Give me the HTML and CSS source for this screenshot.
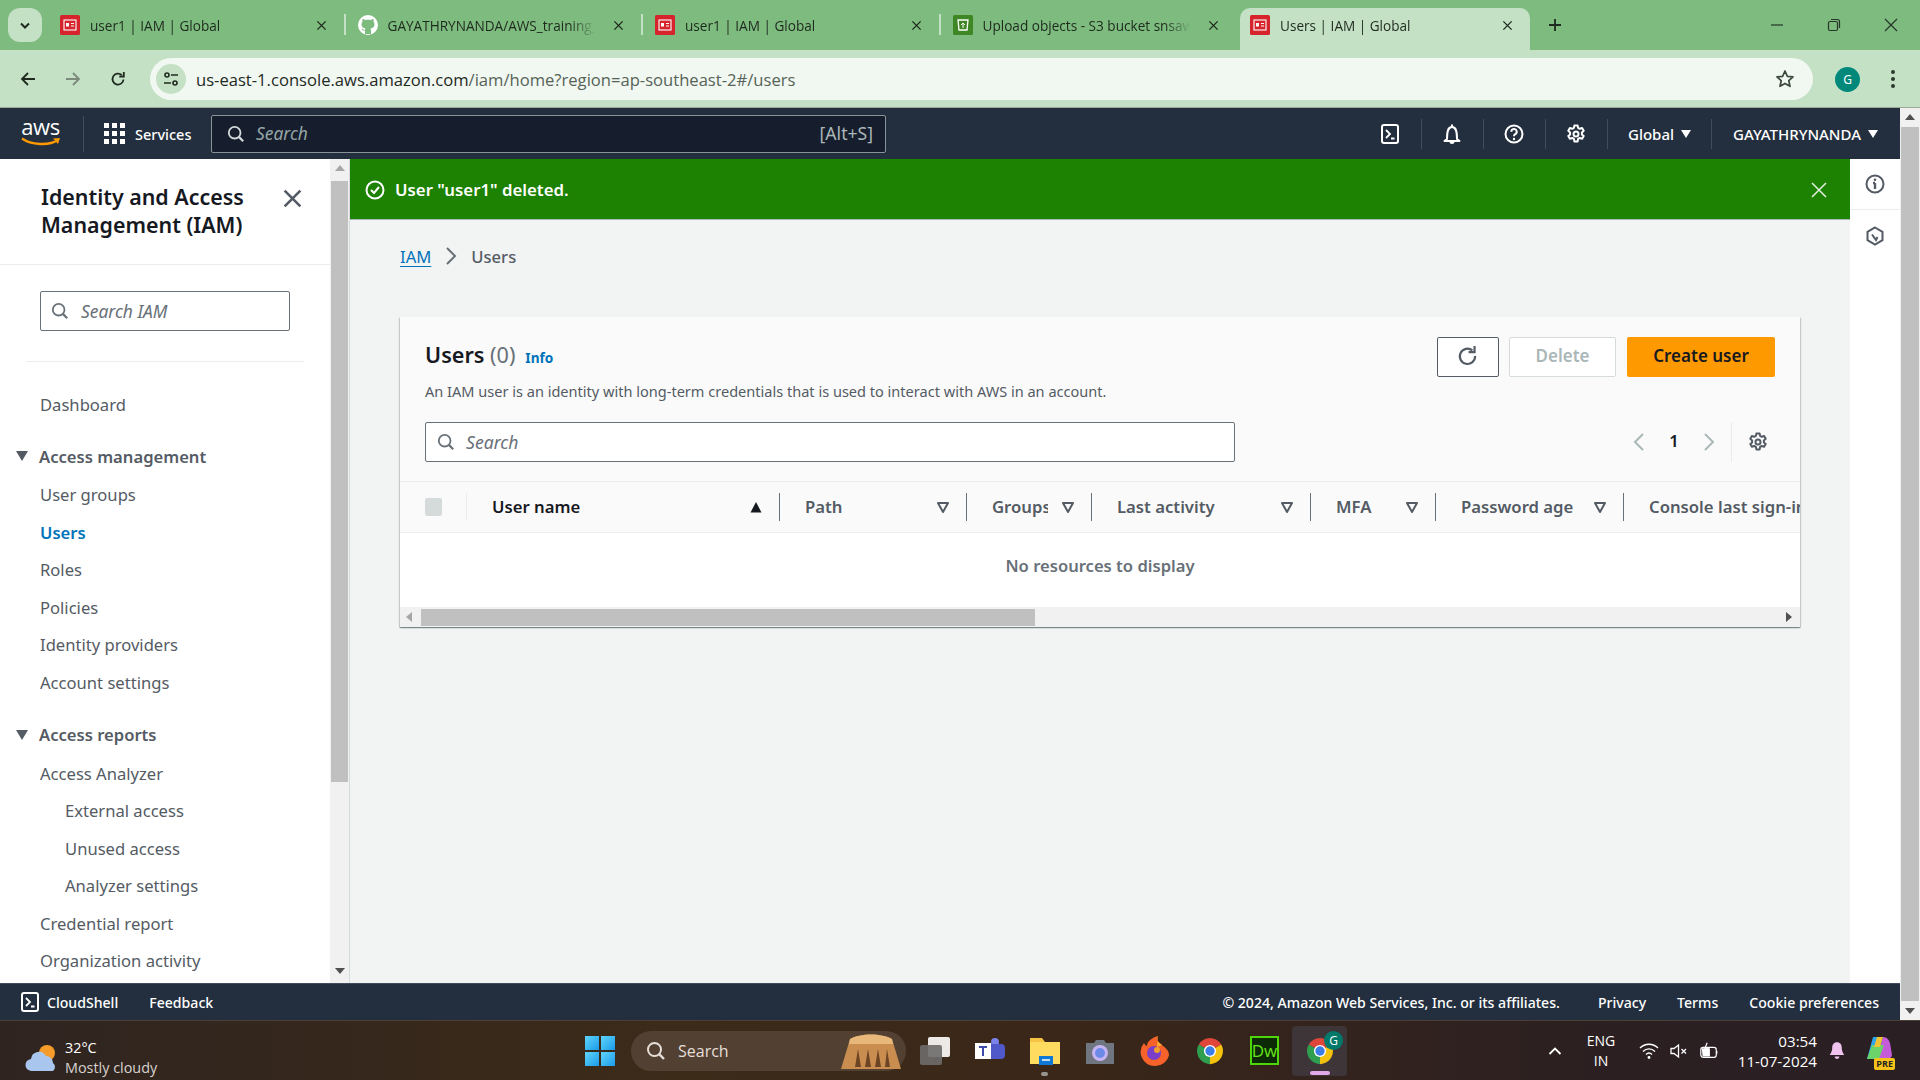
FILE: index.html
```html
<!DOCTYPE html>
<html lang="en">
<head>
    <meta charset="UTF-8">
    <meta name="viewport" content="width=device-width, initial-scale=1.0">
    <title>Users | IAM | Global</title>
    <link rel="stylesheet" href="styles.css">
</head>
<body>
    <svg class="sprites" width="0" height="0">
        <symbol id="i-search" viewBox="0 0 20 20"><circle cx="8.5" cy="8.5" r="6.5" fill="none" stroke="currentColor" stroke-width="2"/><path d="M13.2 13.2 18 18" stroke="currentColor" stroke-width="2.4" fill="none"/></symbol>
        <symbol id="i-close" viewBox="0 0 16 16"><path d="M2 2 14 14M14 2 2 14" stroke="currentColor" stroke-width="2" fill="none"/></symbol>
        <symbol id="i-gear" viewBox="0 0 20 20"><path d="M8.4 1.5h3.2l.5 2.4 1.7.9 2.3-.8 1.6 2.8-1.8 1.6v2l1.8 1.6-1.6 2.8-2.3-.8-1.7.9-.5 2.6H8.4l-.5-2.6-1.7-.9-2.3.8-1.6-2.8 1.8-1.6v-2L2.300 6.800l1.600-2.800 2.300.8 1.700-.9z" fill="none" stroke="currentColor" stroke-width="2" stroke-linejoin="round"/><circle cx="10" cy="10" r="2.500" fill="none" stroke="currentColor" stroke-width="2"/></symbol>
        <symbol id="i-shell" viewBox="0 0 20 20"><rect x="2" y="1" width="16" height="18" rx="2" fill="none" stroke="currentColor" stroke-width="2"/><path d="M6 6l4 4-4 4M11 14.500h3.500" fill="none" stroke="currentColor" stroke-width="1.800"/></symbol>
        <symbol id="i-filter" viewBox="0 0 14 14"><path d="M2 3h10L7 12z" fill="none" stroke="currentColor" stroke-width="2" stroke-linejoin="round"/></symbol>
        <symbol id="i-fav" viewBox="0 0 20 20"><rect width="20" height="20" rx="1.500" fill="#d6242d"/><rect x="4" y="5" width="12" height="10" fill="none" stroke="#fff" stroke-width="1.100"/><rect x="6" y="8" width="3" height="3.500" fill="#fff"/><path d="M11 8.500h3M11 11h3" stroke="#fff"/></symbol>
        <symbol id="i-chrome" viewBox="0 0 32 32"><path d="M16 16 4 9a14 14 0 0 1 24 0z" fill="#e0453a"/><path d="M16 16 28 9a14 14 0 0 1-12 21z" fill="#f4c20d"/><path d="M16 16v14A14 14 0 0 1 4 9z" fill="#2f9e4f"/><circle cx="16" cy="16" r="6.500" fill="#fff"/><circle cx="16" cy="16" r="5" fill="#3b7de9"/></symbol>
    </svg>

    <div class="window">
        <div class="tabstrip">
            <button class="tab-menu"><svg width="12" height="8" viewBox="0 0 12 8"><path d="M2 1.500 6 5.500 10 1.500" fill="none" stroke="#1f2a1f" stroke-width="2"/></svg></button>
            <div class="tab">
                <svg class="favicon"><use href="#i-fav"/></svg>
                <span class="tab-title">user1 | IAM | Global</span>
                <svg class="tab-close"><use href="#i-close"/></svg>
            </div>
            <div class="tab">
                <svg class="favicon" viewBox="0 0 20 20"><circle cx="10" cy="10" r="10" fill="#fff"/><path d="M7 19v-3.500c-2.500.5-3-1-3.500-2 1.200.2 1.800 1.500 3.500 1.500 0-.8.300-1.300.6-1.600C5 13 3.500 12 3.500 9c0-1 .4-1.800 1-2.500-.2-.6-.2-1.500.1-2.400 1 0 2 .5 2.700 1 1.700-.4 3.700-.4 5.400 0 .7-.5 1.700-1 2.700-1 .3.900.3 1.800.1 2.400.6.700 1 1.500 1 2.500 0 3-1.500 4-4.100 4.400.4.400.6 1 .6 1.800V19z" fill="#7dbb7e"/></svg>
                <span class="tab-title">GAYATHRYNANDA/AWS_training_files</span>
                <svg class="tab-close"><use href="#i-close"/></svg>
            </div>
            <div class="tab">
                <svg class="favicon"><use href="#i-fav"/></svg>
                <span class="tab-title">user1 | IAM | Global</span>
                <svg class="tab-close"><use href="#i-close"/></svg>
            </div>
            <div class="tab no-sep">
                <svg class="favicon" viewBox="0 0 20 20"><rect width="20" height="20" rx="1.500" fill="#3f8624"/><path d="M5 5h10l-1 10H6z" fill="none" stroke="#fff" stroke-width="1.300"/><path d="M8 10l2-2 2 2M10 8v5" stroke="#fff" fill="none"/></svg>
                <span class="tab-title">Upload objects - S3 bucket snsaws-bucket</span>
                <svg class="tab-close"><use href="#i-close"/></svg>
            </div>
            <div class="tab active">
                <svg class="favicon"><use href="#i-fav"/></svg>
                <span class="tab-title">Users | IAM | Global</span>
                <svg class="tab-close"><use href="#i-close"/></svg>
            </div>
            <svg class="new-tab" viewBox="0 0 14 14"><path d="M7 1v12M1 7h12" stroke="#1f2a1f" stroke-width="1.800"/></svg>
            <div class="win-controls">
                <svg viewBox="0 0 14 14"><path d="M1 7h12" stroke="#26352a" stroke-width="1.200"/></svg>
                <svg viewBox="0 0 14 14"><rect x="1.500" y="3.500" width="9" height="9" rx="1.500" fill="none" stroke="#26352a" stroke-width="1.200"/><path d="M4 1.500h6.500a2 2 0 0 1 2 2V10" fill="none" stroke="#26352a" stroke-width="1.200"/></svg>
                <svg viewBox="0 0 14 14"><path d="M1 1l12 12M13 1 1 13" stroke="#26352a" stroke-width="1.200"/></svg>
            </div>
        </div>

        <div class="toolbar">
            <svg class="tool-icon" viewBox="0 0 16 16"><path d="M15 8H2M8 2 2 8l6 6" fill="none" stroke="#1f2a1f" stroke-width="1.800"/></svg>
            <svg class="tool-icon" viewBox="0 0 16 16"><path d="M1 8h13M8 2l6 6-6 6" fill="none" stroke="#7b8a7c" stroke-width="1.800"/></svg>
            <svg class="tool-icon" viewBox="0 0 16 16"><path d="M13.500 8.500a5.500 5.500 0 1 1-1.800-4.500" fill="none" stroke="#1f2a1f" stroke-width="1.800"/><path d="M13.800 1v4.500H9.300" fill="none" stroke="#1f2a1f" stroke-width="1.800"/></svg>
            <div class="omnibox">
                <span class="site-chip"><svg width="16" height="16" viewBox="0 0 16 16"><circle cx="4" cy="4" r="2" fill="none" stroke="#1f2a1f" stroke-width="1.600"/><path d="M8 4h7M1 12h7" stroke="#1f2a1f" stroke-width="1.600"/><circle cx="12" cy="12" r="2" fill="none" stroke="#1f2a1f" stroke-width="1.600"/></svg></span>
                <span class="url">us-east-1.console.aws.amazon.com<span class="url-path">/iam/home?region=ap-southeast-2#/users</span></span>
                <svg class="star" viewBox="0 0 20 20"><path d="M10 2l2.400 5.300 5.600.6-4.200 3.800 1.200 5.600L10 14.400l-5 2.900 1.200-5.600L2 7.900l5.600-.6z" fill="none" stroke="#3c4a3d" stroke-width="1.700" stroke-linejoin="round"/></svg>
            </div>
            <span class="profile">G</span>
            <span class="kebab"><i></i><i></i><i></i></span>
        </div>

        <div class="console">
            <div class="console-main">
                <header class="topnav">
                    <div class="aws-logo">
                        <span class="aws-word">aws</span>
                        <svg width="40" height="10" viewBox="0 0 40 10"><path d="M1 1.500C10 8 28 9 37 3" fill="none" stroke="#f90" stroke-width="2.400"/><path d="M32 1.500 39 1l-2 6z" fill="#f90"/></svg>
                    </div>
                    <button class="services">
                        <span class="grid-icon"><i></i><i></i><i></i><i></i><i></i><i></i><i></i><i></i><i></i></span>
                        Services
                    </button>
                    <div class="nav-search">
                        <svg class="ico18"><use href="#i-search"/></svg>
                        <span class="nav-search-text">Search</span>
                        <span class="nav-shortcut">[Alt+S]</span>
                    </div>
                    <div class="nav-right">
                        <span class="nav-icon"><svg class="ico20"><use href="#i-shell"/></svg></span>
                        <span class="nav-icon"><svg class="ico20" viewBox="0 0 20 20"><path d="M10 .5v2.500M5 15c0-8 1-12 5-12s5 4 5 12l2.500 2H2.500z" fill="none" stroke="currentColor" stroke-width="2" stroke-linejoin="round"/><path d="M7.500 18a2.500 2 0 0 0 5 0z" fill="currentColor"/></svg></span>
                        <span class="nav-icon"><svg class="ico20" viewBox="0 0 20 20"><circle cx="10" cy="10" r="8.500" fill="none" stroke="currentColor" stroke-width="2"/><path d="M7.300 7.800A2.700 2.700 0 1 1 11 10.300c-.8.400-1 .9-1 2" fill="none" stroke="currentColor" stroke-width="2"/><circle cx="10" cy="15" r="1.200" fill="currentColor"/></svg></span>
                        <span class="nav-icon"><svg class="ico20"><use href="#i-gear"/></svg></span>
                        <span class="nav-menu region">Global <i class="caret"></i></span>
                        <span class="nav-menu account">GAYATHRYNANDA <i class="caret"></i></span>
                    </div>
                </header>

                <div class="middle">
                    <aside class="sidebar">
                        <nav class="side-nav">
                            <div class="side-head">
                                <h2>Identity and Access Management (IAM)</h2>
                                <svg class="side-close"><use href="#i-close"/></svg>
                            </div>
                            <div class="side-search-wrap">
                                <div class="side-search">
                                    <svg class="ico18"><use href="#i-search"/></svg>
                                    <span>Search IAM</span>
                                </div>
                            </div>
                            <a class="side-link first">Dashboard</a>
                            <div class="side-section"><i class="side-caret"></i>Access management</div>
                            <a class="side-link">User groups</a>
                            <a class="side-link current">Users</a>
                            <a class="side-link">Roles</a>
                            <a class="side-link">Policies</a>
                            <a class="side-link">Identity providers</a>
                            <a class="side-link">Account settings</a>
                            <div class="side-section"><i class="side-caret"></i>Access reports</div>
                            <a class="side-link">Access Analyzer</a>
                            <a class="side-link sub">External access</a>
                            <a class="side-link sub">Unused access</a>
                            <a class="side-link sub">Analyzer settings</a>
                            <a class="side-link">Credential report</a>
                            <a class="side-link">Organization activity</a>
                        </nav>
                        <div class="side-scroll">
                            <i class="arrow up"></i>
                            <div class="side-thumb"></div>
                            <i class="arrow down"></i>
                        </div>
                    </aside>

                    <main class="content">
                        <div class="flash">
                            <svg class="ico20" viewBox="0 0 20 20"><circle cx="10" cy="10" r="8.500" fill="none" stroke="#fff" stroke-width="2"/><path d="M6 10l3 3 5-6" fill="none" stroke="#fff" stroke-width="2"/></svg>
                            <span class="flash-text">User "user1" deleted.</span>
                            <svg class="flash-close" viewBox="0 0 16 16"><path d="M1 1l14 14M15 1 1 15" stroke="#e4f0e0" stroke-width="1.500" fill="none"/></svg>
                        </div>
                        <div class="page">
                            <div class="breadcrumb">
                                <a>IAM</a>
                                <svg width="12" height="20" viewBox="0 0 12 20"><path d="M2 2l8 8-8 8" fill="none" stroke="#687078" stroke-width="2"/></svg>
                                <span>Users</span>
                            </div>

                            <section class="card">
                                <div class="card-top">
                                    <div class="card-title-row">
                                        <div class="card-title">
                                            <h1>Users <span class="count">(0)</span></h1>
                                            <a class="info">Info</a>
                                        </div>
                                        <div class="actions">
                                            <button class="btn btn-icon"><svg width="24" height="24" viewBox="0 0 22 22"><path d="M17.500 10a7 7 0 1 1-2.500-5" fill="none" stroke="#545b64" stroke-width="2"/><path d="M17 1v5.500h-5.500" fill="none" stroke="#545b64" stroke-width="2"/></svg></button>
                                            <button class="btn btn-disabled">Delete</button>
                                            <button class="btn btn-primary">Create user</button>
                                        </div>
                                    </div>
                                    <p class="card-desc">An IAM user is an identity with long-term credentials that is used to interact with AWS in an account.</p>
                                    <div class="filter-row">
                                        <div class="table-search">
                                            <svg class="ico18"><use href="#i-search"/></svg>
                                            <span>Search</span>
                                        </div>
                                        <div class="pager">
                                            <svg width="12" height="20" viewBox="0 0 12 20"><path d="M10 2 2 10l8 8" fill="none" stroke="#aab7b8" stroke-width="2"/></svg>
                                            <span class="page-num">1</span>
                                            <svg width="12" height="20" viewBox="0 0 12 20"><path d="M2 2l8 8-8 8" fill="none" stroke="#aab7b8" stroke-width="2"/></svg>
                                            <span class="pager-gear"><svg class="ico20"><use href="#i-gear"/></svg></span>
                                        </div>
                                    </div>
                                </div>

                                <div class="thead">
                                    <div class="col col-check"><span class="checkbox"></span></div>
                                    <div class="col col-user">
                                        <span class="col-name sorted">User name</span>
                                        <svg class="filter" viewBox="0 0 14 14"><path d="M1.500 12.500 7 2l5.500 10.500z" fill="#16191f"/></svg>
                                    </div>
                                    <div class="col col-path">
                                        <span class="col-name">Path</span>
                                        <svg class="filter"><use href="#i-filter"/></svg>
                                    </div>
                                    <div class="col col-groups">
                                        <span class="col-name">Groups</span>
                                        <svg class="filter"><use href="#i-filter"/></svg>
                                    </div>
                                    <div class="col col-activity">
                                        <span class="col-name">Last activity</span>
                                        <svg class="filter"><use href="#i-filter"/></svg>
                                    </div>
                                    <div class="col col-mfa">
                                        <span class="col-name">MFA</span>
                                        <svg class="filter"><use href="#i-filter"/></svg>
                                    </div>
                                    <div class="col col-age">
                                        <span class="col-name">Password age</span>
                                        <svg class="filter"><use href="#i-filter"/></svg>
                                    </div>
                                    <div class="col col-console">
                                        <span class="col-name">Console last sign-in</span>
                                    </div>
                                </div>
                                <div class="empty">No resources to display</div>
                                <div class="hscroll">
                                    <i class="arrow left"></i>
                                    <div class="hthumb"></div>
                                    <i class="arrow right"></i>
                                </div>
                            </section>
                        </div>
                    </main>

                    <aside class="tools">
                        <div class="tools-btn">
                            <svg class="ico20" viewBox="0 0 20 20"><circle cx="10" cy="10" r="8.500" fill="none" stroke="#545b64" stroke-width="2"/><path d="M10 9v6M8 9h2" stroke="#545b64" stroke-width="2.400"/><circle cx="10" cy="5.800" r="1.300" fill="#545b64"/></svg>
                        </div>
                        <div class="tools-btn">
                            <svg class="ico20" viewBox="0 0 20 20"><path d="M10 1.500 17.500 5.800v8.400L10 18.500 2.500 14.200V5.800z" fill="none" stroke="#545b64" stroke-width="2"/><path d="M7 8.500l4 5.500 1.500-3" fill="none" stroke="#545b64" stroke-width="2"/></svg>
                        </div>
                    </aside>
                </div>

                <footer class="foot">
                    <svg class="ico20"><use href="#i-shell"/></svg>
                    <span class="foot-shell">CloudShell</span>
                    <span class="foot-feedback">Feedback</span>
                    <div class="foot-right">
                        <span>© 2024, Amazon Web Services, Inc. or its affiliates.</span>
                        <span>Privacy</span>
                        <span>Terms</span>
                        <span>Cookie preferences</span>
                    </div>
                </footer>
            </div>

            <div class="page-scroll">
                <i class="arrow up dark"></i>
                <div class="page-thumb"></div>
                <i class="arrow down"></i>
            </div>
        </div>

        <div class="taskbar">
            <div class="weather">
                <svg width="34" height="30" viewBox="0 0 34 30"><circle cx="22" cy="10" r="8" fill="#f59c2a"/><path d="M7 28a6 6 0 0 1-1-12 8 8 0 0 1 15-3 7 7 0 0 1 7 7 5 5 0 0 1 0 8z" fill="#a9c6ee"/></svg>
                <div class="weather-text"><span>32°C</span><span class="weather-sub">Mostly cloudy</span></div>
            </div>
            <div class="task-center">
                <span class="win-logo"><i></i><i></i><i></i><i></i></span>
                <div class="task-search">
                    <svg class="ico20"><use href="#i-search"/></svg>
                    <span>Search</span>
                    <svg class="temple" width="66" height="40" viewBox="0 0 66 40"><path d="M3 38 12 8c10-6 32-6 42 0l9 30z" fill="#c98d4f"/><path d="M12 8c10-6 32-6 42 0l1 5H11z" fill="#e8b77a"/><path d="M17 36l3-18 3 18zM27 36l3-18 3 18zM37 36l3-18 3 18zM47 36l2-18 3 18z" fill="#6e4524"/></svg>
                </div>
                <div class="task-apps">
                    <span class="app"><span class="widgets"><i class="back"></i><i class="front"></i></span></span>
                    <span class="app"><svg width="30" height="32" viewBox="0 0 30 32"><rect x="16" y="3" width="8" height="8" rx="4" fill="#7b83eb"/><rect x="12" y="9" width="18" height="15" rx="4" fill="#5059c9"/><rect x="0" y="8" width="16" height="16" fill="#fff"/><path d="M4 12h8M8 12v9" stroke="#3f4aa8" stroke-width="2"/></svg></span>
                    <span class="app"><svg width="30" height="30" viewBox="0 0 30 30"><path d="M0 2h12l3 4h15v22H0z" fill="#f6c344"/><rect y="6" width="30" height="22" fill="#ffdc60"/><rect x="9" y="20" width="14" height="9" fill="#0f78d4"/><path d="M12 24h8" stroke="#fff" stroke-width="1.500"/></svg><i class="app-dot"></i></span>
                    <span class="app"><svg width="30" height="30" viewBox="0 0 30 30"><path d="M1 7h8l2-3h8l2 3h8v21H1z" fill="#6f7680"/><circle cx="15" cy="17" r="8" fill="#c6b4f2"/><circle cx="15" cy="17" r="5" fill="#6e8ae8"/></svg></span>
                    <span class="app"><svg width="30" height="32" viewBox="0 0 30 32"><path d="M15 31A14 14 0 0 1 4 8c1 2 2 3 3 3 0-4 4-8 11-10-2 4 0 6 4 9 4 3 7 6 7 10a14 14 0 0 1-14 11z" fill="#f7622b"/><path d="M18 1c-2 4 0 6 4 9l-5 2z" fill="#fcb32c"/><circle cx="14" cy="18" r="7" fill="#7a3fc9"/><circle cx="17" cy="15" r="3" fill="#f3a02b"/></svg></span>
                    <span class="app"><svg width="30" height="30" viewBox="0 0 32 32"><use href="#i-chrome"/></svg></span>
                    <span class="app"><span class="dw">Dw</span></span>
                    <span class="app current">
                        <svg width="30" height="30" viewBox="0 0 32 32"><use href="#i-chrome"/></svg>
                        <span class="app-badge">G</span>
                        <i class="app-bar"></i>
                    </span>
                </div>
            </div>
            <div class="tray">
                <svg class="tray-chev" viewBox="0 0 14 10"><path d="M1.500 8 7 2.500 12.500 8" fill="none" stroke="#fff" stroke-width="1.800"/></svg>
                <div class="lang"><span>ENG</span><span>IN</span></div>
                <svg class="tray-ico" viewBox="0 0 20 20"><path d="M1 7c5-5 13-5 18 0M4 10.500c3.500-3.500 8.500-3.500 12 0M7 13.500c2-2 4-2 6 0" fill="none" stroke="#fff" stroke-width="1.400"/><circle cx="10" cy="16.500" r="1.400" fill="#fff"/></svg>
                <svg class="tray-ico" viewBox="0 0 20 20"><path d="M2 7.500h3L9.500 4v12L5 12.500H2z" fill="none" stroke="#fff" stroke-width="1.300"/><path d="M12.500 8l4.500 4.500M17 8l-4.500 4.500" stroke="#fff" stroke-width="1.300"/></svg>
                <svg class="tray-ico" viewBox="0 0 22 20"><rect x="2" y="6" width="17" height="11" rx="2.500" fill="none" stroke="#fff" stroke-width="1.300"/><path d="M3 7h9v9H4z" fill="#fff"/><path d="M19.500 10v3" stroke="#fff" stroke-width="1.500"/><path d="M9 1 6.500 7H10l-2 5" fill="none" stroke="#fff" stroke-width="1.300"/></svg>
                <div class="clock"><span>03:54</span><span>11-07-2024</span></div>
                <svg class="tray-bell" viewBox="0 0 20 24"><path d="M10 1c-4 0-6 3-6 7 0 5-2 7-3 9h18c-1-2-3-4-3-9 0-4-2-7-6-7z" fill="#f0c4ee"/><path d="M7 19a3 3 0 0 0 6 0z" fill="#f0c4ee"/></svg>
                <span class="copilot">
                    <svg width="30" height="32" viewBox="0 0 30 32"><path d="M10 3h10l-6 22H4z" fill="#2da5e8"/><path d="M20 3c4 0 6 3 7 6l2 12c0 2-2 4-5 4H14z" fill="#c45bd9"/><path d="M9 11h12l-5 14H4z" fill="#6cd36b"/><path d="M14 3h6l-3 10h-6z" fill="#f1c232"/></svg>
                    <span class="pre">PRE</span>
                </span>
            </div>
        </div>
    </div>
</body>
</html>
```

FILE: styles.css
```css
* {
    box-sizing: border-box;
}

html, body {
    margin: 0;
    height: 100%;
    overflow: hidden;
}

body {
    font-family: 'Noto Sans', 'Open Sans', sans-serif;
    font-size: 16.6px;
    color: #16191f;
}

.sprites {
    position: absolute;
}

button {
    font-family: inherit;
}

.window {
    display: flex;
    flex-direction: column;
    width: 1920px;
    height: 1080px;
}

.ico18 {
    width: 18px;
    height: 18px;
    flex: none;
}

.ico20 {
    width: 20px;
    height: 20px;
    flex: none;
}

/* browser tabs */
.tabstrip {
    display: flex;
    align-items: flex-end;
    height: 50px;
    padding-left: 8px;
    background-color: #7dbb7e;
    font-family: 'Open Sans', sans-serif;
    font-size: 13.6px;
    color: #1f2a1f;
}

.tab-menu {
    align-self: flex-start;
    width: 34px;
    height: 34px;
    margin: 8px 6px 0 0;
    padding: 0;
    border: none;
    border-radius: 12px;
    background-color: #c4e1c5;
}

.tab {
    display: flex;
    align-items: center;
    width: 297.5px;
    height: 42px;
    padding: 0 17px 8px 12px;
    border-right: 2px solid #c4e1c5;
    border-image: linear-gradient(transparent 17%, #c4e1c5 17%, #c4e1c5 64%, transparent 64%) 1;
}

.tab.no-sep,
.tab.active {
    border-right: 2px solid transparent;
    border-image: none;
}

.tab.active {
    width: 290px;
    margin-left: 2px;
    padding-left: 10px;
    border-right: none;
    border-radius: 10px 10px 0 0;
    background-color: #c4e1c5;
}

.favicon {
    width: 20px;
    height: 20px;
    flex: none;
    margin-right: 10px;
}

.tab-title {
    flex: 1;
    min-width: 0;
    overflow: hidden;
    white-space: nowrap;
    -webkit-mask-image: linear-gradient(to right, #000 88%, transparent);
    mask-image: linear-gradient(to right, #000 88%, transparent);
}

.tab-close {
    width: 11px;
    height: 11px;
    flex: none;
    margin-left: 18px;
    color: #1f2a1f;
}

.new-tab {
    width: 14px;
    height: 14px;
    margin: 0 0 18px 18px;
}

.win-controls {
    display: flex;
    gap: 43px;
    margin: 0 22px 18px auto;
}

.win-controls svg {
    width: 14px;
    height: 14px;
}

/* browser toolbar */
.toolbar {
    display: flex;
    align-items: center;
    height: 58px;
    padding: 1px 0 0 20px;
    background-color: #c4e1c5;
    border-bottom: 1px solid #9aaa9b;
}

.tool-icon {
    width: 16px;
    height: 16px;
    flex: none;
    margin-right: 29px;
}

.tool-icon:nth-of-type(3) {
    margin-right: 24px;
}

.omnibox {
    display: flex;
    align-items: center;
    width: 1663px;
    height: 42px;
    padding: 0 18px 0 6px;
    border-radius: 21px;
    background-color: #f1f7f1;
    font-family: 'Open Sans', sans-serif;
}

.site-chip {
    display: flex;
    align-items: center;
    justify-content: center;
    width: 30px;
    height: 30px;
    margin-right: 10px;
    border-radius: 50%;
    background-color: #c4e1c5;
}

.url {
    flex: 1;
    font-size: 16.6px;
    color: #1f2a1f;
}

.url-path {
    color: #566357;
}

.star {
    width: 20px;
    height: 20px;
}

.profile {
    display: flex;
    align-items: center;
    justify-content: center;
    width: 25px;
    height: 25px;
    margin-left: 22px;
    border-radius: 50%;
    background-color: #00897b;
    color: #fff;
    font-size: 12px;
}

.kebab {
    display: flex;
    flex-direction: column;
    gap: 3px;
    margin-left: 31px;
}

.kebab i {
    width: 4px;
    height: 4px;
    border-radius: 50%;
    background-color: #2c3a2d;
}

/* console frame */
.console {
    display: flex;
    height: 912px;
}

.console-main {
    display: flex;
    flex-direction: column;
    width: 1900px;
}

.page-scroll {
    display: flex;
    flex-direction: column;
    align-items: center;
    width: 20px;
    background-color: #f1f1f1;
}

.page-thumb {
    width: 18px;
    height: 874px;
    margin: 7px 0;
    background-color: #c0c0c0;
}

.arrow {
    display: block;
    flex: none;
    width: 0;
    height: 0;
    border: 5px solid transparent;
}

.arrow.up {
    margin-top: 6px;
    border-top: none;
    border-bottom: 6px solid #a6a6a6;
}

.arrow.up.dark {
    border-bottom-color: #505050;
}

.arrow.down {
    border-bottom: none;
    border-top: 6px solid #505050;
}

.arrow.left {
    border-left: none;
    border-right: 6px solid #a6a6a6;
}

.arrow.right {
    border-right: none;
    border-left: 6px solid #505050;
}

/* top nav */
.topnav {
    display: flex;
    align-items: center;
    flex: none;
    height: 51px;
    background-color: #232f3e;
    color: #fff;
}

.aws-logo {
    display: flex;
    flex-direction: column;
    align-items: center;
    width: 84px;
    height: 36px;
    padding: 0 2px 0 0;
    border-right: 1px solid #414d5c;
}

.aws-word {
    height: 20px;
    font-family: 'Open Sans', sans-serif;
    font-size: 22px;
    line-height: 20px;
    letter-spacing: -0.5px;
}

.aws-logo svg {
    margin-top: 1px;
}

.services {
    display: flex;
    align-items: center;
    gap: 10px;
    width: 127px;
    padding: 0 0 0 20px;
    border: none;
    background: none;
    color: #fff;
    font-size: 14.5px;
    font-weight: 500;
}

.grid-icon {
    display: grid;
    grid-template-columns: repeat(3, 5px);
    gap: 3px;
}

.grid-icon i {
    height: 5px;
    background-color: #fff;
}

.nav-search {
    display: flex;
    align-items: center;
    width: 675px;
    height: 38px;
    padding: 0 12px 0 15px;
    border: 1px solid #879596;
    border-radius: 2px;
    background-color: #161e2d;
    color: #d5dbdb;
}

.nav-search-text {
    flex: 1;
    margin-left: 11px;
    padding-bottom: 1px;
    font-size: 17.4px;
    font-style: italic;
    color: #95a5a6;
}

.nav-shortcut {
    padding-bottom: 1px;
    color: #aab7b8;
    font-size: 17.6px;
}

.nav-right {
    display: flex;
    align-items: center;
    margin-left: auto;
    padding-right: 22px;
}

.nav-icon {
    display: flex;
    align-items: center;
    justify-content: center;
    width: 62px;
    height: 30px;
    border-right: 1px solid #414d5c;
}

.nav-menu {
    display: flex;
    align-items: center;
    gap: 8px;
    height: 30px;
    font-size: 15px;
    font-weight: 500;
}

.region {
    padding: 0 20px;
    border-right: 1px solid #414d5c;
}

.account {
    padding-left: 21px;
}

.caret {
    width: 0;
    height: 0;
    margin-left: -1px;
    border-left: 5px solid transparent;
    border-right: 5px solid transparent;
    border-top: 8px solid #fff;
}

/* sidebar + content */
.middle {
    display: flex;
    flex: 1;
    min-height: 0;
}

.sidebar {
    display: flex;
    flex: none;
    width: 350px;
    border-right: 1px solid #d5dbdb;
    background-color: #fff;
}

.side-nav {
    width: 330px;
    color: #545b64;
}

.side-head {
    display: flex;
    align-items: flex-start;
    justify-content: space-between;
    height: 106px;
    padding: 24px 27px 0 41px;
    border-bottom: 1px solid #eaeded;
}

.side-head h2 {
    width: 220px;
    margin: 0;
    font-size: 21.4px;
    font-weight: 600;
    line-height: 28px;
    color: #16191f;
}

.side-close {
    width: 21px;
    height: 21px;
    margin-top: 5px;
    color: #545b64;
}

.side-search-wrap {
    margin: 0 26px;
    padding: 26px 14px 30px;
    border-bottom: 1px solid #eaeded;
}

.side-search {
    display: flex;
    align-items: center;
    gap: 12px;
    height: 40px;
    padding-left: 10px;
    border: 1px solid #687078;
    border-radius: 2px;
    font-size: 17.4px;
    font-style: italic;
    color: #687078;
}

.side-link {
    display: block;
    height: 37.5px;
    padding-left: 40px;
    line-height: 37.5px;
}

.side-link.first {
    margin: 24px 0 14px;
}

.side-link.current {
    color: #0073bb;
    font-weight: 600;
}

.side-link.sub {
    padding-left: 65px;
}

.side-section {
    display: flex;
    align-items: center;
    height: 37.5px;
    margin-bottom: 1px;
    padding-left: 16px;
    font-weight: 600;
}

.side-link:nth-of-type(7) {
    margin-bottom: 15px;
}

.side-caret {
    width: 0;
    height: 0;
    margin-right: 11px;
    border-left: 6px solid transparent;
    border-right: 6px solid transparent;
    border-top: 10px solid #545b64;
}

.side-scroll {
    display: flex;
    flex-direction: column;
    align-items: center;
    width: 19px;
    background-color: #f1f1f1;
}

.side-thumb {
    width: 17px;
    height: 601px;
    margin: 10px 0 186px;
    background-color: #c0c0c0;
}

.content {
    display: flex;
    flex: 1;
    flex-direction: column;
    min-width: 0;
    background-color: #f2f3f3;
}

.flash {
    display: flex;
    align-items: center;
    flex: none;
    height: 61px;
    padding: 1px 23px 0 15px;
    background-color: #1d8102;
    border-bottom: 1px solid #aab7b8;
    color: #fff;
}

.flash-text {
    flex: 1;
    margin-left: 10px;
    font-size: 16.8px;
    font-weight: 600;
}

.flash-close {
    width: 16px;
    height: 16px;
}

.page {
    padding: 23px 49px 0 50px;
}

.breadcrumb {
    display: flex;
    align-items: center;
    gap: 14px;
    height: 26px;
    margin-bottom: 48px;
    color: #545b64;
    font-weight: 500;
}

.breadcrumb a {
    color: #0073bb;
    font-weight: 400;
    text-decoration: underline;
    text-underline-offset: 3px;
}

.card {
    display: flex;
    flex-direction: column;
    width: 1400px;
    height: 310px;
    background-color: #fff;
    box-shadow: 0 1px 1px 0 rgba(0, 28, 36, 0.3), 1px 1px 1px 0 rgba(0, 28, 36, 0.15), -1px 1px 1px 0 rgba(0, 28, 36, 0.15);
}

.card-top {
    height: 165px;
    padding: 20px 25px 0;
    background-color: #fafafa;
    border-bottom: 1px solid #eaeded;
}

.card-title-row {
    display: flex;
    align-items: flex-start;
    justify-content: space-between;
}

.card-title {
    display: flex;
    align-items: baseline;
    gap: 10px;
}

.card-title h1 {
    margin: 0;
    font-size: 21.6px;
    font-weight: 600;
    line-height: 36px;
}

.count {
    font-weight: 400;
    color: #687078;
}

.info {
    color: #0073bb;
    font-size: 13.6px;
    font-weight: 700;
}

.actions {
    display: flex;
    gap: 10px;
}

.btn {
    height: 40px;
    padding: 0 0 3px;
    border: 1px solid transparent;
    border-radius: 2px;
    font-size: 17px;
    font-weight: 600;
}

.btn-icon {
    display: flex;
    align-items: center;
    justify-content: center;
    width: 62px;
    padding: 0;
    border-color: #545b64;
    background-color: #fff;
}

.btn-disabled {
    width: 107px;
    border-color: #d5dbdb;
    background-color: #fff;
    color: #aab7b8;
}

.btn-primary {
    width: 148px;
    margin-left: 1px;
    background-color: #f90;
    color: #16191f;
}

.card-desc {
    margin: 4px 0 0;
    font-size: 14.55px;
    line-height: 20px;
    color: #545b64;
}

.filter-row {
    display: flex;
    align-items: center;
    justify-content: space-between;
    margin-top: 21px;
}

.table-search {
    display: flex;
    align-items: center;
    gap: 11px;
    width: 810px;
    height: 40px;
    padding-left: 11px;
    border: 1px solid #687078;
    border-radius: 2px;
    background-color: #fff;
    font-size: 17.6px;
    font-style: italic;
    color: #687078;
}

.pager {
    display: flex;
    align-items: center;
    color: #16191f;
}

.page-num {
    width: 58px;
    padding-bottom: 3px;
    text-align: center;
    font-weight: 600;
}

.pager-gear {
    display: flex;
    align-items: center;
    height: 40px;
    margin-left: 16px;
    padding-left: 16px;
    padding-right: 7px;
    border-left: 1px solid #eaeded;
    color: #545b64;
}

.thead {
    display: flex;
    align-items: center;
    flex: none;
    height: 51px;
    overflow: hidden;
    background-color: #fafafa;
    border-bottom: 1px solid #eaeded;
}

.col {
    display: flex;
    align-items: center;
    flex: none;
    height: 28px;
    padding: 0 16px 0 25px;
    border-right: 1px solid #687078;
    font-size: 16.7px;
    font-weight: 600;
    color: #545b64;
}

.col-check {
    width: 67px;
    border-right-color: #eaeded;
}

.col-user {
    width: 313px;
}

.col-path {
    width: 187px;
}

.col-groups {
    width: 125px;
}

.col-activity {
    width: 219px;
}

.col-mfa {
    width: 125px;
}

.col-age {
    width: 188px;
}

.col-console {
    width: 240px;
    border-right: none;
}

.col-name {
    flex: 1;
    min-width: 0;
    padding-bottom: 2px;
    overflow: hidden;
    white-space: nowrap;
}

.col-groups .col-name {
    margin-right: 13px;
}

.col-name.sorted {
    color: #16191f;
}

.filter {
    width: 14px;
    height: 14px;
    flex: none;
    color: #545b64;
}

.checkbox {
    width: 17px;
    height: 18px;
    border-radius: 2px;
    background-color: #d5dbdb;
}

.empty {
    flex: 1;
    padding-top: 21px;
    text-align: center;
    font-weight: 600;
    color: #687078;
}

.hscroll {
    display: flex;
    align-items: center;
    flex: none;
    height: 20px;
    padding: 0 8px 0 6px;
    background-color: #f1f1f1;
}

.hthumb {
    width: 614px;
    height: 17px;
    margin-left: 9px;
    background-color: #c0c0c0;
}

.hscroll .arrow.right {
    margin-left: auto;
}

.tools {
    flex: none;
    width: 50px;
    background-color: #fff;
}

.tools-btn {
    display: flex;
    align-items: center;
    justify-content: center;
    height: 51px;
    border-bottom: 1px solid #eaeded;
}

.tools-btn + .tools-btn {
    border-bottom: none;
}

/* console footer */
.foot {
    display: flex;
    align-items: center;
    flex: none;
    height: 37px;
    padding: 0 21px 0 20px;
    background-color: #232f3e;
    border-top: 1px solid #414d5c;
    color: #fff;
    font-size: 14.1px;
    font-weight: 500;
}

.foot-shell {
    margin-left: 7px;
}

.foot-feedback {
    margin-left: 31px;
}

.foot-right {
    display: flex;
    gap: 31px;
    margin-left: auto;
}

.foot-right span:first-child {
    margin-right: 7px;
}

/* windows taskbar */
.taskbar {
    display: flex;
    align-items: center;
    position: relative;
    height: 60px;
    padding: 0 25px;
    background: linear-gradient(to right, #2f2420, #3c2b19 35%, #3a2719 55%, #2b1f22 85%, #2a2023);
    border-top: 1px solid #4a4038;
    font-family: 'Open Sans', sans-serif;
    color: #fff;
}

.weather {
    display: flex;
    align-items: center;
    gap: 6px;
    width: 560px;
    margin-top: 14px;
}

.weather-text {
    display: flex;
    flex-direction: column;
    font-size: 14.4px;
    line-height: 20px;
}

.weather-sub {
    color: #d8d3cf;
}

.task-center {
    display: flex;
    align-items: center;
}

.win-logo {
    display: grid;
    grid-template-columns: 14px 14px;
    gap: 2px;
    flex: none;
}

.win-logo i {
    height: 14px;
    background: linear-gradient(135deg, #5fd4fb, #1a9be8);
}

.task-search {
    display: flex;
    align-items: center;
    gap: 12px;
    position: relative;
    width: 275px;
    height: 40px;
    margin-left: 16px;
    padding-left: 15px;
    border-radius: 20px;
    background-color: #524033;
    font-size: 16px;
    color: #e6dfd8;
}

.temple {
    position: absolute;
    right: 2px;
    top: 0;
}

.task-apps {
    display: flex;
    align-items: center;
    margin-left: 1px;
}

.app {
    display: flex;
    align-items: center;
    justify-content: center;
    position: relative;
    width: 55px;
    height: 50px;
}

.widgets {
    position: relative;
    width: 30px;
    height: 28px;
}

.widgets i {
    position: absolute;
    border-radius: 2px;
}

.widgets .back {
    right: 0;
    top: 0;
    width: 22px;
    height: 20px;
    background-color: #ece9e6;
}

.widgets .front {
    left: 0;
    bottom: 0;
    width: 22px;
    height: 20px;
    background-color: rgba(110, 108, 106, 0.9);
}

.app-dot {
    position: absolute;
    bottom: 0;
    width: 7px;
    height: 4px;
    border-radius: 2px;
    background-color: #9a9491;
}

.dw {
    display: flex;
    align-items: center;
    justify-content: center;
    width: 29px;
    height: 29px;
    border: 2px solid #4dd60a;
    background-color: #0b2a05;
    color: #66e31a;
    font-size: 17px;
}

.app.current {
    border-radius: 4px;
    background-color: #3e3539;
}

.app-badge {
    position: absolute;
    top: 5px;
    right: 4px;
    width: 19px;
    height: 19px;
    border-radius: 50%;
    background-color: #00796b;
    font-size: 12px;
    line-height: 19px;
    text-align: center;
}

.app-bar {
    position: absolute;
    bottom: 1px;
    width: 20px;
    height: 4px;
    border-radius: 2px;
    background-color: #e2a8ea;
}

.tray {
    display: flex;
    align-items: center;
    margin-left: auto;
    margin-right: 2px;
}

.tray-chev {
    width: 14px;
    height: 10px;
}

.lang {
    display: flex;
    flex-direction: column;
    align-items: center;
    width: 40px;
    margin: 0 18px 0 19px;
    font-size: 14px;
    line-height: 20px;
}

.tray-ico {
    width: 20px;
    height: 20px;
    margin-right: 10px;
}

.clock {
    display: flex;
    flex-direction: column;
    align-items: flex-end;
    width: 86px;
    margin-left: 2px;
    font-size: 15.2px;
    line-height: 20px;
}

.tray-bell {
    width: 16px;
    height: 20px;
    margin-left: 12px;
}

.copilot {
    position: relative;
    width: 30px;
    height: 34px;
    margin-left: 18px;
}

.pre {
    position: absolute;
    right: -2px;
    bottom: -2px;
    padding: 0 2px;
    border-radius: 2px;
    background-color: #f7c21a;
    color: #222;
    font-size: 9px;
    font-weight: 700;
    line-height: 12px;
}
```
